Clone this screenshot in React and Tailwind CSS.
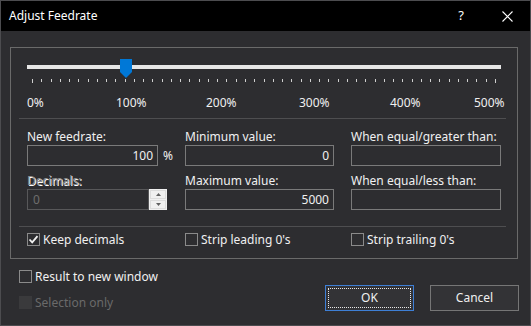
import React from "react";

const FONT = "font-['Noto_Sans',sans-serif]";

function Checkbox({ label, checked, disabled, textCls = "" }) {
    return (
        <div className="flex items-center h-[13px] gap-[3px]">
            <div className={`w-[13px] h-[13px] flex items-center justify-center flex-shrink-0 ${disabled ? "bg-[#3a3a3c]" : "border border-[#8a8a8a]"}`}>
                {checked && (
                    <svg width="11" height="11" viewBox="0 0 11 11">
                        <path d="M1.5 5.5 L4.2 8.3 L9.5 2.2" fill="none" stroke="#f2f2f2" strokeWidth="1.8" />
                    </svg>
                )}
            </div>
            <span className={`text-[12px] leading-[16px] whitespace-nowrap ${disabled ? "text-[#6a6a6a]" : "text-[#f0f0f0]"} ${textCls}`}>
                {label}
            </span>
        </div>
    );
}

function Field({ value, width }) {
    return (
        <div className={`h-[21px] border border-[#7a7a7a] flex items-center justify-end pr-[4px] text-[12px] text-[#f0f0f0] ${width}`}>
            {value}
        </div>
    );
}

function Ticks() {
    const ticks = [];
    for (let i = 0; i <= 50; i++) {
        const x = Math.round(i * 9.26) + 0.5;
        const end = i === 0 || i === 50;
        ticks.push(<line key={i} x1={x} x2={x} y1="0" y2={end ? 4 : 3} stroke="#cfcfcf" strokeWidth="1" />);
    }
    return (
        <svg width="465" height="5" className="ml-[5px] mt-[10px] block">
            {ticks}
        </svg>
    );
}

export default function App() {
    return (
        <div className={`w-[531px] h-[326px] overflow-hidden border border-[#4c4c4f] bg-[#2d2d30] ${FONT} text-[#f0f0f0]`}>

            {/* Title bar */}
            <div className="h-[30px] bg-black flex items-center">
                <span className="pl-[8px] text-[12px] text-white">Adjust Feedrate</span>
                <div className="ml-auto flex items-center h-full">
                    <div className="w-[46px] h-full flex items-center justify-center text-[13px] text-white">?</div>
                    <div className="w-[46px] h-full flex items-center justify-center">
                        <svg width="11" height="11" viewBox="0 0 11 11">
                            <path d="M0.5 0.5 L10.5 10.5 M10.5 0.5 L0.5 10.5" stroke="#ffffff" strokeWidth="1.1" />
                        </svg>
                    </div>
                </div>
            </div>

            <div className="pl-[9px]">
                {/* Group box */}
                <div className="mt-[16px] w-[508px] border border-[#6a6a6a] pt-[11px] pb-[12px]">

                    {/* Slider */}
                    <div className="relative h-[24px] ml-[16px] pt-[6px]">
                        <div className="h-[4px] w-[474px] bg-[#e6e6e6]" />
                        <Ticks />
                        <svg width="12" height="19" viewBox="0 0 12 19" className="absolute left-[93px] top-0">
                            <path d="M0 0 H12 V13 L6 19 L0 13 Z" fill="#0078d7" />
                        </svg>
                    </div>

                    {/* Percent labels */}
                    <div className="mt-[12px] h-[16px] flex pl-[16px] text-[12px] leading-[16px]">
                        <span className="w-[89px]">0%</span>
                        <span className="w-[90px]">100%</span>
                        <span className="w-[93px]">200%</span>
                        <span className="w-[91px]">300%</span>
                        <span className="w-[84px]">400%</span>
                        <span>500%</span>
                    </div>

                    <div className="mt-[7px] ml-[8px] w-[487px] h-px bg-[#4e4e50]" />

                    {/* Fields */}
                    <div className="mt-[10px] flex pl-[16px] text-[12px] leading-[16px]">
                        <div className="w-[158px]">
                            <div className="h-[16px]">New feedrate:</div>
                            <div className="flex items-center">
                                <Field value="100" width="w-[131px]" />
                                <span className="ml-[5px]">%</span>
                            </div>
                            <div className="mt-[7px] h-[16px] text-[#8d8d8d] [text-shadow:1px_1px_0_#ffffff]">Decimals:</div>
                            <div className="flex">
                                <div className="h-[21px] w-[122px] border border-[#58585a] flex items-center pl-[5px] text-[#6d6d6d]">0</div>
                                <div className="h-[21px] w-[18px] bg-[#f0f0f0] flex flex-col p-px gap-px">
                                    <div className="flex-1 border border-[#dcdcdc] flex items-center justify-center">
                                        <svg width="5" height="3" viewBox="0 0 5 3"><path d="M0 3 L2.5 0 L5 3 Z" fill="#606060" /></svg>
                                    </div>
                                    <div className="flex-1 border border-[#dcdcdc] flex items-center justify-center">
                                        <svg width="5" height="3" viewBox="0 0 5 3"><path d="M0 0 L2.5 3 L5 0 Z" fill="#606060" /></svg>
                                    </div>
                                </div>
                            </div>
                        </div>
                        <div className="w-[166px]">
                            <div className="h-[16px]">Minimum value:</div>
                            <Field value="0" width="w-[149px]" />
                            <div className="mt-[7px] h-[16px]">Maximum value:</div>
                            <Field value="5000" width="w-[149px]" />
                        </div>
                        <div className="w-[150px]">
                            <div className="h-[16px] whitespace-nowrap">When equal/greater than:</div>
                            <Field value="" width="w-[150px]" />
                            <div className="mt-[7px] h-[16px] whitespace-nowrap">When equal/less than:</div>
                            <Field value="" width="w-[150px]" />
                        </div>
                    </div>

                    <div className="mt-[16px] ml-[8px] w-[487px] h-px bg-[#4e4e50]" />

                    {/* Options */}
                    <div className="mt-[6px] flex pl-[16px]">
                        <div className="w-[158px]"><Checkbox label="Keep decimals" checked /></div>
                        <div className="w-[166px]"><Checkbox label="Strip leading 0's" /></div>
                        <div className="w-[150px]"><Checkbox label="Strip trailing 0's" /></div>
                    </div>
                </div>

                {/* Bottom row */}
                <div className="flex">
                    <div className="pt-[11px] pl-[9px] flex flex-col gap-[13px]">
                        <Checkbox label="Result to new window" />
                        <Checkbox label="Selection only" disabled />
                    </div>
                    <div className="ml-auto mr-[11px] mt-[26px] flex gap-[16px] text-[12px]">
                        <button className="w-[89px] h-[26px] bg-[#333336] border border-[#3e7fd6] p-[2px]">
                            <div className="w-full h-full border border-dotted border-[#e8e8e8] flex items-center justify-center">OK</div>
                        </button>
                        <button className="w-[89px] h-[26px] bg-[#333336] border border-[#767676] flex items-center justify-center">
                            Cancel
                        </button>
                    </div>
                </div>
            </div>
        </div>
    );
}
